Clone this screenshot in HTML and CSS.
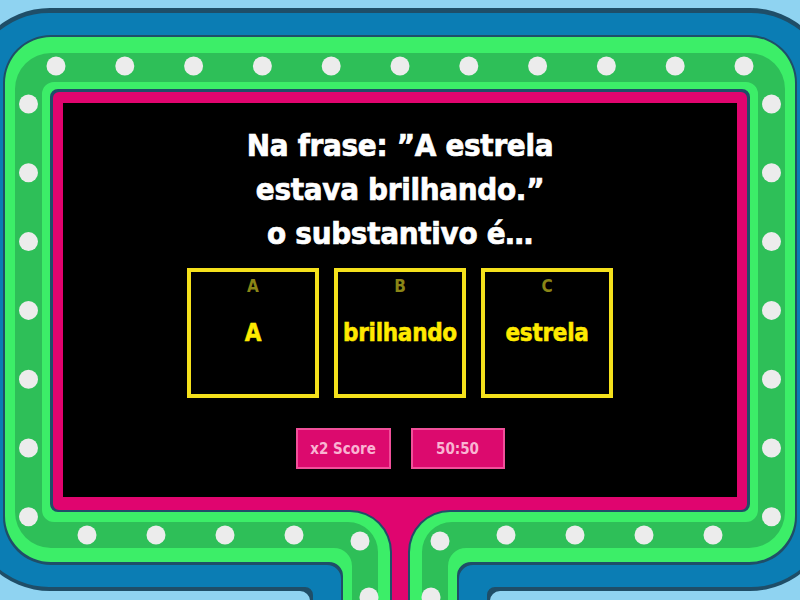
FILE: index.html
```html
<!DOCTYPE html>
<html lang="pt">
<head>
<meta charset="utf-8">
<title>Quiz</title>
<link rel="stylesheet" href="styles.css">
</head>
<body>
<div class="stage">
  <svg class="frame" width="800" height="600" viewBox="0 0 800 600" aria-hidden="true">
    <path fill="#1f4e68" d="M50,8 H750 A82,82 0 0 1 832,90 V509 A82,82 0 0 1 750,591 H500 A10,10 0 0 0 490,601 V620 H310 V601 A10,10 0 0 0 300,591 H50 A82,82 0 0 1 -32,509 V90 A82,82 0 0 1 50,8 Z"/>
    <path fill="#0b7db4" d="M49,13 H751 A78,78 0 0 1 829,91 V509 A78,78 0 0 1 751,587 H495 A8,8 0 0 0 487,595 V620 H313 V595 A8,8 0 0 0 305,587 H49 A78,78 0 0 1 -29,509 V91 A78,78 0 0 1 49,13 Z"/>
    <path fill="#1f4e68" d="M51,35 H749 A48,48 0 0 1 797,83 V517 A48,48 0 0 1 749,565 H473 A14,14 0 0 0 459,579 V620 H341 V579 A14,14 0 0 0 327,565 H51 A48,48 0 0 1 3,517 V83 A48,48 0 0 1 51,35 Z"/>
    <path fill="#3cee68" d="M51,37 H749 A46,46 0 0 1 795,83 V516 A46,46 0 0 1 749,562 H471 A14,14 0 0 0 457,576 V620 H343 V576 A14,14 0 0 0 329,562 H51 A46,46 0 0 1 5,516 V83 A46,46 0 0 1 51,37 Z"/>
    <path fill="#2ebf58" d="M51,53 H749 A36,36 0 0 1 785,89 V512 A36,36 0 0 1 749,548 H466 A18,18 0 0 0 448,566 V620 H352 V566 A18,18 0 0 0 334,548 H51 A36,36 0 0 1 15,512 V89 A36,36 0 0 1 51,53 Z"/>
    <path fill="#3cee68" d="M54,82 H746 A12,12 0 0 1 758,94 V510 A12,12 0 0 1 746,522 H452 A30,30 0 0 0 422,552 V620 H378 V552 A30,30 0 0 0 348,522 H54 A12,12 0 0 1 42,510 V94 A12,12 0 0 1 54,82 Z"/>
    <path fill="#1f4e68" d="M58,89 H742 A8,8 0 0 1 750,97 V504 A8,8 0 0 1 742,512 H450 A40,40 0 0 0 410,552 V620 H390 V552 A40,40 0 0 0 350,512 H58 A8,8 0 0 1 50,504 V97 A8,8 0 0 1 58,89 Z"/>
    <path fill="#e0056f" d="M59,92 H741 A6,6 0 0 1 747,98 V504 A6,6 0 0 1 741,510 H450 A42,42 0 0 0 408,552 V620 H392 V552 A42,42 0 0 0 350,510 H59 A6,6 0 0 1 53,504 V98 A6,6 0 0 1 59,92 Z"/>
    <g fill="#ececec">
      <circle cx="56" cy="66" r="9.5"/><circle cx="124.8" cy="66" r="9.5"/><circle cx="193.6" cy="66" r="9.5"/>
      <circle cx="262.4" cy="66" r="9.5"/><circle cx="331.2" cy="66" r="9.5"/><circle cx="400" cy="66" r="9.5"/>
      <circle cx="468.8" cy="66" r="9.5"/><circle cx="537.6" cy="66" r="9.5"/><circle cx="606.4" cy="66" r="9.5"/>
      <circle cx="675.2" cy="66" r="9.5"/><circle cx="744" cy="66" r="9.5"/>
      <circle cx="28.5" cy="104" r="9.5"/><circle cx="28.5" cy="172.8" r="9.5"/><circle cx="28.5" cy="241.6" r="9.5"/>
      <circle cx="28.5" cy="310.4" r="9.5"/><circle cx="28.5" cy="379.2" r="9.5"/><circle cx="28.5" cy="448" r="9.5"/>
      <circle cx="28.5" cy="516.8" r="9.5"/>
      <circle cx="771.5" cy="104" r="9.5"/><circle cx="771.5" cy="172.8" r="9.5"/><circle cx="771.5" cy="241.6" r="9.5"/>
      <circle cx="771.5" cy="310.4" r="9.5"/><circle cx="771.5" cy="379.2" r="9.5"/><circle cx="771.5" cy="448" r="9.5"/>
      <circle cx="771.5" cy="516.8" r="9.5"/>
      <circle cx="87" cy="535" r="9.5"/><circle cx="156" cy="535" r="9.5"/><circle cx="225" cy="535" r="9.5"/>
      <circle cx="294" cy="535" r="9.5"/><circle cx="506" cy="535" r="9.5"/><circle cx="575" cy="535" r="9.5"/>
      <circle cx="644" cy="535" r="9.5"/><circle cx="713" cy="535" r="9.5"/>
      <circle cx="360" cy="541" r="9.5"/><circle cx="369" cy="597" r="9.5"/>
      <circle cx="440" cy="541" r="9.5"/><circle cx="431" cy="597" r="9.5"/>
    </g>
  </svg>
  <main class="screen">
    <h1 class="question">Na frase: ”A estrela<br>estava brilhando.”<br>o substantivo é…</h1>
    <div class="answers">
      <div class="answer"><span class="label">A</span><span class="text">A</span></div>
      <div class="answer"><span class="label">B</span><span class="text">brilhando</span></div>
      <div class="answer"><span class="label">C</span><span class="text">estrela</span></div>
    </div>
    <div class="powerups">
      <button class="power power-score">x2 Score</button>
      <button class="power power-half">50:50</button>
    </div>
  </main>
</div>
</body>
</html>
```
FILE: styles.css
```css
html, body {
  margin: 0;
  padding: 0;
  background: #8fd3f1;
}

.stage {
  position: relative;
  width: 800px;
  height: 600px;
  overflow: hidden;
  box-sizing: border-box;
  padding-top: 103px;
  background: #8fd3f1;
  font-family: "DejaVu Sans Condensed", "DejaVu Sans", sans-serif;
  font-stretch: condensed;
  font-weight: bold;
}

.frame {
  position: absolute;
  left: 0;
  top: 0;
}

.screen {
  position: relative;
  margin: 0 63px;
  height: 394px;
  box-sizing: border-box;
  padding-top: 20px;
  background: #000;
  display: flex;
  flex-direction: column;
  align-items: center;
}

.question {
  margin: 0;
  color: #ffffff;
  font-size: 31px;
  line-height: 44px;
  font-weight: bold;
  text-align: center;
  letter-spacing: -0.3px;
  -webkit-text-stroke: 0.7px #ffffff;
}

.answers {
  margin-top: 13px;
  display: flex;
  gap: 15px;
}

.answer {
  width: 132px;
  height: 130px;
  box-sizing: border-box;
  border: 4px solid #f5e11c;
  padding-top: 4px;
  display: flex;
  flex-direction: column;
  align-items: center;
}

.label {
  color: #8a8516;
  font-size: 17px;
  line-height: 20px;
}

.text {
  margin-top: 23px;
  color: #ffea00;
  font-size: 24px;
  line-height: 28px;
  letter-spacing: -0.3px;
  -webkit-text-stroke: 0.5px #ffea00;
}

.powerups {
  margin-top: 30px;
  display: flex;
  gap: 20px;
}

.power {
  height: 41px;
  box-sizing: border-box;
  padding: 0;
  border: 2px solid #f0509a;
  background: #dc0a6e;
  color: #f9b4d2;
  font-family: inherit;
  font-stretch: condensed;
  font-weight: bold;
  font-size: 15px;
}

.power-score {
  width: 95px;
}

.power-half {
  width: 94px;
}
```
